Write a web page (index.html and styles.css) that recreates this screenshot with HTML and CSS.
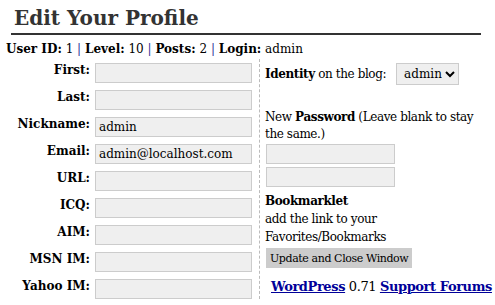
FILE: index.html
```html
<!DOCTYPE html>
<html lang="en">
<head>
    <meta charset="UTF-8">
    <title>Edit Your Profile</title>
    <link rel="stylesheet" href="styles.css">
</head>
<body>
    <div class="wrap">
        <h2>Edit Your Profile</h2>
        <p class="info">
            <strong>User ID:</strong> 1 <span class="sep">|</span>
            <strong>Level:</strong> 10 <span class="sep">|</span>
            <strong>Posts:</strong> 2 <span class="sep">|</span>
            <strong>Login:</strong> admin
        </p>
        <form class="profile">
            <div class="fields">
                <label>First:</label><input class="text" type="text" name="first">
                <label>Last:</label><input class="text" type="text" name="last">
                <label>Nickname:</label><input class="text" type="text" name="nick" value="admin">
                <label>Email:</label><input class="text" type="text" name="email" value="admin@localhost.com">
                <label>URL:</label><input class="text" type="text" name="url">
                <label>ICQ:</label><input class="text" type="text" name="icq">
                <label>AIM:</label><input class="text" type="text" name="aim">
                <label>MSN IM:</label><input class="text" type="text" name="msn">
                <label>Yahoo IM:</label><input class="text" type="text" name="yim">
            </div>
            <div class="side">
                <div class="identity">
                    <span><strong>Identity</strong> on the blog:</span>
                    <select class="select" name="idmode">
                        <option>admin</option>
                    </select>
                </div>
                <p class="pass-label">New <strong>Password</strong> (Leave blank to stay the same.)</p>
                <input class="text pass" type="password" name="pass1">
                <input class="text pass" type="password" name="pass2">
                <p class="bookmark"><strong>Bookmarklet</strong><br>add the link to your<br>Favorites/Bookmarks</p>
                <input class="button" type="submit" value="Update and Close Window">
                <p class="footer"><a href="#">WordPress</a> 0.71 <a href="#">Support Forums</a></p>
            </div>
        </form>
    </div>
</body>
</html>
```

FILE: styles.css
```css
* {
    padding: 0;
    margin: 0;
    box-sizing: border-box;
}

body {
    background: #fff;
    color: #000;
    font-family: "DejaVu Serif", Georgia, serif;
    font-size: 12px;
    overflow: hidden;
}

.wrap {
    padding: 0 4px 0 6px;
}

h2 {
    margin: 0 10px 0 5px;
    padding: 7px 0 4px 3px;
    font-size: 20px;
    line-height: 22px;
    color: #333;
    border-bottom: #333 solid 2px;
}

.info {
    padding: 6px 0 0 0;
    line-height: 16px;
}

.sep {
    color: #339;
}

.profile {
    display: flex;
    margin-top: 2px;
}

.fields {
    display: grid;
    grid-template-columns: 84px 157px;
    grid-auto-rows: 20px;
    column-gap: 5px;
    row-gap: 7px;
    padding: 4px 7px 0 0;
}

.fields label {
    font-weight: bold;
    text-align: right;
    line-height: 15px;
}

.text {
    height: 20px;
    background: #efefef;
    border: #ccc solid 1px;
    font-family: "DejaVu Serif", Georgia, serif;
    font-size: 12px;
    padding: 0 3px;
    outline: none;
}

.side {
    flex: 1;
    border-left: #bbb dashed 1px;
    padding: 4px 0 0 5px;
    display: flex;
    flex-direction: column;
    align-items: flex-start;
    letter-spacing: -0.4px;
}

.identity {
    display: flex;
    align-items: center;
    gap: 10px;
    height: 22px;
}

.select {
    height: 22px;
    width: 63px;
    background: #efefef;
    border: #ccc solid 1px;
    font-family: "DejaVu Serif", Georgia, serif;
    font-size: 12px;
    letter-spacing: 0;
    padding-left: 3px;
}

.pass-label {
    margin-top: 24px;
    line-height: 17px;
}

.pass {
    width: 129px;
    margin: 1px 0 2px 1px;
}

.bookmark {
    margin-top: 3px;
    line-height: 18px;
}

.button {
    margin: 2px 0 0 1px;
    height: 20px;
    padding: 0 4px;
    background: #ccc;
    border: none;
    font-family: "DejaVu Serif", Georgia, serif;
    font-size: 11px;
    letter-spacing: -0.4px;
}

.footer {
    margin: 11px 0 0 6px;
    font-size: 13px;
    white-space: nowrap;
}

.footer a {
    color: #009;
    font-weight: bold;
}
```
